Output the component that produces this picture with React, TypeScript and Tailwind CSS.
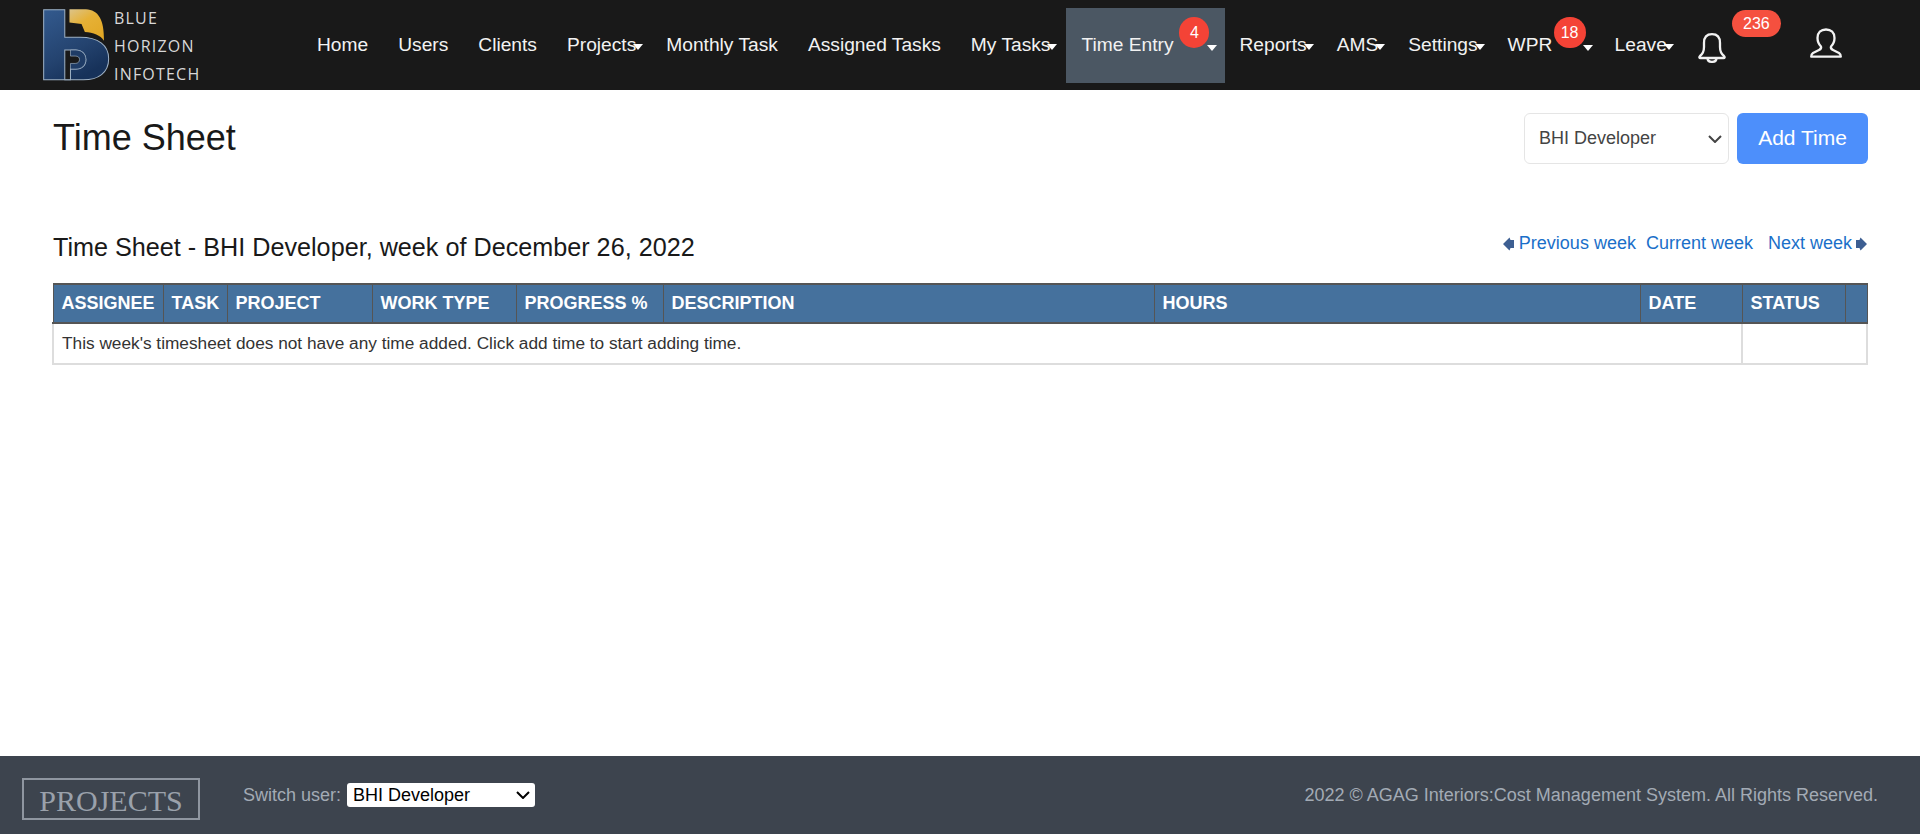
const sans = 'font-["Liberation_Sans",Arial,sans-serif]';

const navItems = [
  { label: 'Home' },
  { label: 'Users' },
  { label: 'Clients' },
  { label: 'Projects', caret: true },
  { label: 'Monthly Task' },
  { label: 'Assigned Tasks' },
  { label: 'My Tasks', caret: true },
];

const navItemsAfter = [
  { label: 'Reports', caret: true },
  { label: 'AMS', caret: true },
  { label: 'Settings', caret: true },
];

const columns = [
  { label: 'ASSIGNEE', width: 'w-[110px]' },
  { label: 'TASK', width: 'w-[64px]' },
  { label: 'PROJECT', width: 'w-[145px]' },
  { label: 'WORK TYPE', width: 'w-[144px]' },
  { label: 'PROGRESS %', width: 'w-[147px]' },
  { label: 'DESCRIPTION', width: 'w-[491px]' },
  { label: 'HOURS', width: 'w-[486px]' },
  { label: 'DATE', width: 'w-[102px]' },
  { label: 'STATUS', width: 'w-[103px]' },
  { label: '', width: 'w-[22px]' },
];

function Caret({ className }: { className: string }) {
  return (
    <span
      className={`absolute h-0 w-0 border-x-[5px] border-t-[6px] border-x-transparent border-t-white ${className}`}
    />
  );
}

function NavLink({ label, caret }: { label: string; caret?: boolean }) {
  return (
    <a className="block px-[15px] pt-[23px] text-[19.2px] leading-[27px] text-[#f2f2f2]">
      <span className="relative inline-block">
        {label}
        {caret && <Caret className="left-full top-[13px] -ml-[3px]" />}
      </span>
    </a>
  );
}

function Chevron({ className }: { className: string }) {
  return (
    <svg
      width="14"
      height="8"
      viewBox="0 0 14 8"
      fill="none"
      stroke="currentColor"
      strokeWidth="2"
      className={`pointer-events-none absolute ${className}`}
    >
      <path d="M1 1 L7 7 L13 1" />
    </svg>
  );
}

function Logo() {
  return (
    <div className="flex w-[302px] shrink-0 pl-[43px] pt-[9px]">
      <svg width="67" height="72" viewBox="40 28 200 214" className="shrink-0">
        <defs>
          <linearGradient id="blueFill" x1="0" y1="0" x2="0.5" y2="1">
            <stop offset="0" stopColor="#335a8e" />
            <stop offset="0.65" stopColor="#24436f" />
            <stop offset="1" stopColor="#17325a" />
          </linearGradient>
          <linearGradient id="goldFill" x1="0" y1="0" x2="0.7" y2="1">
            <stop offset="0" stopColor="#dcc48a" />
            <stop offset="0.45" stopColor="#e6b136" />
            <stop offset="1" stopColor="#e2a826" />
          </linearGradient>
        </defs>
        <path
          d="M42 30 H105 V112 H150 C205 112 236 135 236 176 C236 218 205 239 160 239 H42 Z"
          fill="url(#blueFill)"
          stroke="#9fb2c6"
          strokeWidth="3"
        />
        <path
          d="M105 150 H138 C156 150 168 162 168 178 C168 196 156 207 138 207 H122 V239 H105 Z"
          fill="#191919"
          stroke="#9fb2c6"
          strokeWidth="3"
        />
        <path
          d="M122 207 H138 C156 207 168 196 168 178 C168 162 156 150 138 150 H122 V168 H136 C145 168 149 172 149 178 C149 185 145 190 136 190 H122 Z"
          fill="#1f3c66"
          stroke="#9fb2c6"
          strokeWidth="2"
        />
        <path
          d="M119 28 H168 C205 30 223 58 222 122 C212 105 190 98 165 96 L155 72 L119 68 Z"
          fill="url(#goldFill)"
        />
      </svg>
      <div className='ml-[4px] -mt-px flex h-[76px] flex-col justify-between font-["Open_Sans",sans-serif] text-[16px] leading-[20px] tracking-[1.2px] text-[#d8d8d8]'>
        <span>BLUE</span>
        <span>HORIZON</span>
        <span>INFOTECH</span>
      </div>
    </div>
  );
}

function Header() {
  return (
    <header className="flex h-[90px] shrink-0 bg-[#191919] pt-[8px]">
      <div className="-mt-[8px]">
        <Logo />
      </div>
      <nav className="flex h-[75px] items-start">
        {navItems.map((item) => (
          <NavLink key={item.label} label={item.label} caret={item.caret} />
        ))}
        <a className="relative ml-px -mr-px block h-[75px] w-[159px] bg-[#4b5763] pl-[15px] pt-[23px] text-[19.2px] leading-[27px] text-[#f2f2f2]">
          Time Entry
          <span className="absolute left-[113px] top-[9px] flex h-[31px] w-[30px] items-center justify-center rounded-full bg-[#f44336] text-[16px] text-white">
            4
          </span>
          <Caret className="left-[141px] top-[37px]" />
        </a>
        {navItemsAfter.map((item) => (
          <NavLink key={item.label} label={item.label} caret={item.caret} />
        ))}
        <a className="relative block w-[107px] pl-[15px] pt-[23px] text-[19.2px] leading-[27px] text-[#f2f2f2]">
          WPR
          <span className="absolute left-[61px] top-[9px] flex h-[31px] w-[32px] items-center justify-center rounded-full bg-[#f44336] text-[16px] text-white">
            18
          </span>
          <Caret className="left-[90px] top-[37px]" />
        </a>
        <NavLink label="Leave" caret />
      </nav>
      <div className="relative ml-[16px] mt-[25px] h-[30px] w-[28px]">
        <svg width="28" height="30" viewBox="0 0 28 30" fill="none" stroke="#f2f2f2" strokeWidth="2.3" strokeLinejoin="round">
          <path d="M14 1.2 C8.5 1.2 6 5 6 10 V14 C6 19 4 21.5 2 23 C1 24 1.2 25 2.5 25 H25.5 C26.8 25 27 24 26 23 C24 21.5 22 19 22 14 V10 C22 5 19.5 1.2 14 1.2 Z" />
          <path d="M9.5 25.5 C10 30 18 30 18.5 25.5" />
        </svg>
        <span className="absolute left-[34px] top-[-23px] flex h-[27px] w-[49px] items-center justify-center rounded-[14px] bg-[#f5503f] text-[16px] text-white">
          236
        </span>
      </div>
      <div className="ml-[84px] mt-[20px]">
        <svg width="32" height="30" viewBox="0 0 32 30" fill="none" stroke="#f2f2f2" strokeWidth="2.3" strokeLinejoin="round">
          <path d="M16 1.5 C11 1.5 7.5 4.5 7.5 10 C7.5 14 9.5 17 11 18.5 C11.5 20 11 21 9 22 L3 25 C1.5 26 1.2 27 1.2 28.7 H30.8 C30.8 27 30.5 26 29 25 L23 22 C21 21 20.5 20 21 18.5 C22.5 17 24.5 14 24.5 10 C24.5 4.5 21 1.5 16 1.5 Z" />
        </svg>
      </div>
    </header>
  );
}

function Diamond({ flip }: { flip?: boolean }) {
  return (
    <svg width="11" height="14" viewBox="0 0 11 14" className={flip ? 'rotate-180' : ''}>
      <path d="M0 7 L6.5 0.5 L7.5 3 H11 V11 H7.5 L6.5 13.5 Z" fill="#3d5f92" />
    </svg>
  );
}

function TimeTable() {
  return (
    <table className="-ml-px mt-[20px] w-[1814px] table-fixed border-collapse">
      <thead>
        <tr className="h-[39px] bg-[#45719d]">
          {columns.map((col) => (
            <th
              key={col.label || 'actions'}
              className={`${col.width} border-x border-y-2 border-[#555555] px-[8px] pb-[2px] text-left text-[18px] font-bold leading-none text-white`}
            >
              {col.label}
            </th>
          ))}
        </tr>
      </thead>
      <tbody>
        <tr className="h-[41px] text-[17.25px] text-[#333333]">
          <td colSpan={8} className="border-2 border-t-0 border-[#dddddd] px-[8px]">
            This week's timesheet does not have any time added. Click add time to start adding time.
          </td>
          <td colSpan={2} className="border-2 border-t-0 border-[#dddddd]" />
        </tr>
      </tbody>
    </table>
  );
}

function Footer() {
  return (
    <footer className="flex h-[78px] shrink-0 items-center bg-[#3d444e] pl-[22px] pr-[42px]">
      <div className='mt-[7px] flex h-[42px] w-[178px] items-center justify-center border-2 border-[#8f96a0] pt-[3px] font-["Liberation_Serif",serif] text-[30px] text-[#9aa1ab]'>
        PROJECTS
      </div>
      <span className="ml-[43px] text-[18px] text-[#a3abb5]">Switch user:</span>
      <div className="relative ml-[6px] text-black">
        <select className="block h-[24px] w-[188px] appearance-none rounded-[3px] bg-white pl-[6px] text-[18px] leading-[22px]">
          <option>BHI Developer</option>
        </select>
        <Chevron className="right-[5px] top-[8px]" />
      </div>
      <span className="ml-auto text-[18px] text-[#a3abb5]">
        2022 © AGAG Interiors:Cost Management System. All Rights Reserved.
      </span>
    </footer>
  );
}

export default function App() {
  return (
    <div className={`flex min-h-[834px] flex-col bg-white ${sans}`}>
      <Header />
      <main className="flex-1 px-[53px]">
        <div className="flex items-start justify-between pt-[23px]">
          <h1 className="pt-[3px] text-[36px] leading-[44px] text-[#191919]">Time Sheet</h1>
          <div className="-mr-px flex gap-[8px]">
            <div className="relative text-[#444444]">
              <select className="block h-[51px] w-[205px] appearance-none rounded-[6px] border border-[#e5e5e5] bg-white pl-[14px] text-[18px]">
                <option>BHI Developer</option>
              </select>
              <Chevron className="right-[7px] top-[22px]" />
            </div>
            <button className="h-[51px] w-[131px] rounded-[6px] bg-[#4d8ffb] pb-[2px] text-[21px] text-white">Add Time</button>
          </div>
        </div>
        <div className="mt-[60px] flex items-start justify-between">
          <h2 className="pt-[7px] text-[25.2px] leading-[32px] text-[#191919]">
            Time Sheet - BHI Developer, week of December 26, 2022
          </h2>
          <div className="flex items-center pt-[6px] text-[18px] leading-[27px] text-[#1a6fc9]">
            <Diamond />
            <a className="ml-[5px]">Previous week</a>
            <a className="ml-[10px]">Current week</a>
            <a className="ml-[15px]">Next week</a>
            <span className="ml-[4px]">
              <Diamond flip />
            </span>
          </div>
        </div>
        <TimeTable />
      </main>
      <Footer />
    </div>
  );
}
